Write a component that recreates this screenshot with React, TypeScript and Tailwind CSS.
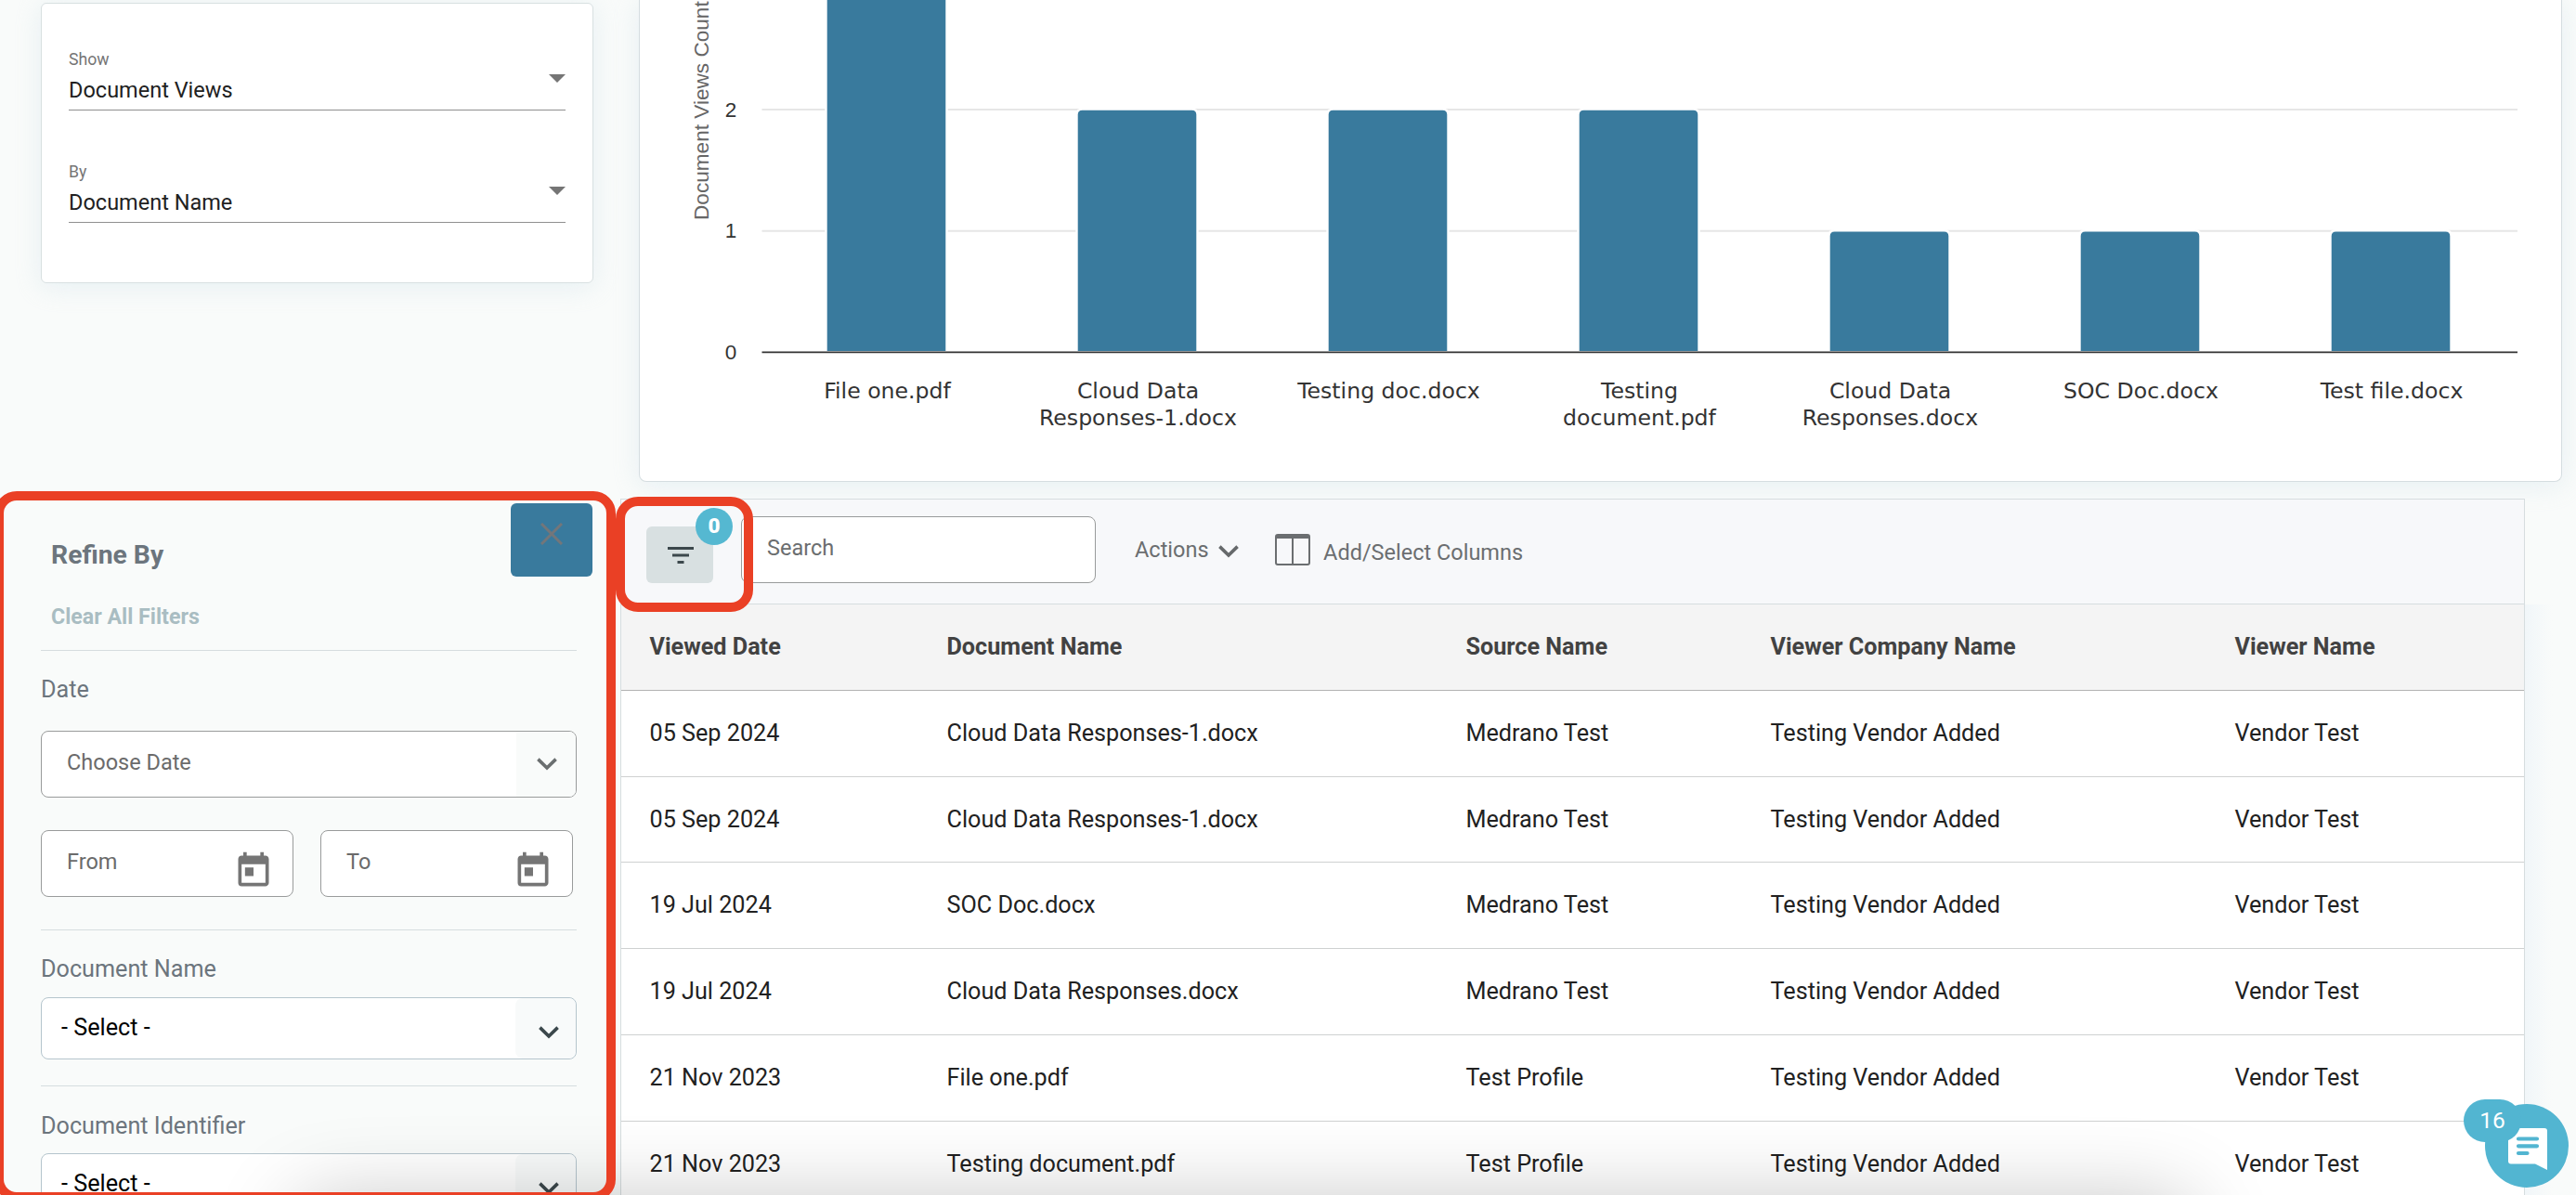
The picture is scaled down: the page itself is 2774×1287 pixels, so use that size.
import { MdToday } from 'react-icons/md';
import clsx from 'clsx';

const bars = [
  { label: ['File one.pdf'], value: 3 },
  { label: ['Cloud Data', 'Responses-1.docx'], value: 2 },
  { label: ['Testing doc.docx'], value: 2 },
  { label: ['Testing', 'document.pdf'], value: 2 },
  { label: ['Cloud Data', 'Responses.docx'], value: 1 },
  { label: ['SOC Doc.docx'], value: 1 },
  { label: ['Test file.docx'], value: 1 },
];

const columns = ['Viewed Date', 'Document Name', 'Source Name', 'Viewer Company Name', 'Viewer Name'];

const rows = [
  ['05 Sep 2024', 'Cloud Data Responses-1.docx', 'Medrano Test', 'Testing Vendor Added', 'Vendor Test'],
  ['05 Sep 2024', 'Cloud Data Responses-1.docx', 'Medrano Test', 'Testing Vendor Added', 'Vendor Test'],
  ['19 Jul 2024', 'SOC Doc.docx', 'Medrano Test', 'Testing Vendor Added', 'Vendor Test'],
  ['19 Jul 2024', 'Cloud Data Responses.docx', 'Medrano Test', 'Testing Vendor Added', 'Vendor Test'],
  ['21 Nov 2023', 'File one.pdf', 'Test Profile', 'Testing Vendor Added', 'Vendor Test'],
  ['21 Nov 2023', 'Testing document.pdf', 'Test Profile', 'Testing Vendor Added', 'Vendor Test'],
];

const rowClass = 'grid grid-cols-[320px_559px_328px_500px_1fr] items-center pl-[30.5px] h-[92.8px] border-b text-[25.2px]';

const AXIS_Y = 379.3;
const STEP_Y = 130.6;

const Chevron = ({ className }: { className?: string }) => (
  <svg viewBox="0 0 22 14" className={clsx('w-[22px] h-3.5 shrink-0', className)} fill="none" stroke="currentColor" strokeWidth="3.6">
    <path d="M1.4 1.6 11 11l9.6-9.4" />
  </svg>
);

const ReportSelect = ({ label, value }: { label: string; value: string }) => (
  <div className="flex items-end justify-between border-b border-[#8f8f8f] pb-[5px]">
    <div className="flex flex-col gap-[7px]">
      <span className="text-[17.7px] leading-5 text-[#757575]">{label}</span>
      <span className="text-[23.5px] leading-8 text-[#212121]">{value}</span>
    </div>
    <svg viewBox="0 0 18 9" className="w-[18px] h-[9px] mb-6 text-[#757575]" fill="currentColor">
      <path d="M0 0h18L9 9z" />
    </svg>
  </div>
);

const DateField = ({ label }: { label: string }) => (
  <div className="flex items-center justify-between w-[272px] h-[72px] bg-white border border-[#999b9b] rounded-lg pl-[27px] pr-5">
    <span className="text-[23.5px] leading-8 text-[#6b6b6b] pb-1">{label}</span>
    <MdToday className="text-[44px] text-[#757575] mt-[15px]" />
  </div>
);

const FilterSelect = () => (
  <div className="flex justify-between h-[67px] bg-white border border-[#b5c5cd] rounded-lg overflow-hidden">
    <span className="pl-[21px] pt-4 text-[25.2px] leading-8 text-black">- Select -</span>
    <div className="w-[65px] pl-[25px] pt-[30px] bg-[#f8fafa] rounded-lg">
      <Chevron className="text-[#3c484c]" />
    </div>
  </div>
);

const Chart = () => (
  <svg viewBox="689 0 2069 518" className="block w-[2069px] h-[518px]">
    {[1, 2].map((v) => (
      <line key={v} x1="820.5" x2="2711" y1={AXIS_Y - v * STEP_Y} y2={AXIS_Y - v * STEP_Y} stroke="#e6e6e6" strokeWidth="2" />
    ))}
    {[0, 1, 2].map((v) => (
      <text key={v} x="787" y={AXIS_Y + 7.5 - v * STEP_Y} textAnchor="middle" className="font-['Liberation_Sans',sans-serif] text-[22.5px]" fill="#333">
        {v}
      </text>
    ))}
    <text transform="translate(763 237) rotate(-90)" className="font-['Liberation_Sans',sans-serif] text-[22.6px]" fill="#666">
      Document Views Count
    </text>
    {bars.map((bar, i) => {
      const x = 889.5 + i * 270;
      const top = AXIS_Y - 0.5 - bar.value * STEP_Y;
      return (
        <g key={i}>
          <path
            d={`M${x} ${AXIS_Y}V${top + 6}q0 -6 6 -6h118q6 0 6 6V${AXIS_Y}z`}
            fill="#397a9d"
            stroke="#fff"
            strokeWidth="2.4"
          />
          {bar.label.map((line, n) => (
            <text key={n} x={x + 66} y={429 + n * 29} textAnchor="middle" className="font-['DejaVu_Sans',sans-serif] text-[23.6px]" fill="#333">
              {line}
            </text>
          ))}
        </g>
      );
    })}
    <line x1="820.5" x2="2711" y1={AXIS_Y} y2={AXIS_Y} stroke="#333" strokeWidth="1.8" />
  </svg>
);

const RefinePanel = () => (
  <aside className="w-[668px] h-[750px] overflow-hidden pl-11 pr-[47px] text-[25.2px] leading-8 text-[#6c757d]">
    <div className="flex items-start justify-between pl-[11px] -mr-[17px] h-[84px]">
      <h2 className="mt-[43px] text-[28.3px] leading-9 font-bold">Refine By</h2>
      <button className="flex justify-center w-[88px] h-[79px] mt-[5px] pt-[21px] bg-[#397a9d] rounded-md">
        <svg viewBox="0 0 24 24" className="w-6 h-6" fill="none" stroke="#73767a" strokeWidth="3">
          <path d="M1 1l22 22M23 1 1 23" />
        </svg>
      </button>
    </div>
    <button className="block mt-[27px] ml-[11px] text-[23.2px] font-bold text-[#a9bdc2]">Clear All Filters</button>

    <div className="mt-5 border-t border-[#d6dddf]">
      <div className="mt-[26px]">Date</div>
      <div className="flex justify-between h-[72px] mt-7 bg-white border border-[#999b9b] rounded-lg overflow-hidden">
        <span className="pl-[27px] pt-[17px] text-[23.5px] text-[#6b6b6b]">Choose Date</span>
        <div className="w-16 pl-[22px] pt-7 bg-[#f9fbfa]">
          <Chevron className="text-[#6b6f70]" />
        </div>
      </div>
      <div className="flex gap-[29px] mt-[35px]">
        <DateField label="From" />
        <DateField label="To" />
      </div>
    </div>

    <div className="mt-[35px] border-t border-[#d6dddf]">
      <div className="mt-[26px] mb-3.5">Document Name</div>
      <FilterSelect />
    </div>

    <div className="mt-7 border-t border-[#d6dddf]">
      <div className="mt-[27px] mb-[13px]">Document Identifier</div>
      <FilterSelect />
    </div>
  </aside>
);

const Toolbar = () => (
  <div className="flex items-start h-[113px] pl-[27px] bg-[#f7f8fa] border-b border-[#d6dddf] text-[23.5px] leading-8 text-[#6b6e70]">
    <button className="relative flex justify-center w-[72px] h-[61px] mt-[29px] pt-[22px] bg-[#d8e0e1] rounded-md">
      <svg viewBox="0 0 28 18" className="w-7 h-[18px] ml-px" fill="#3c484c">
        <path d="M0 0h28v3H0zM5 7.5h18v3H5zM10.500 15h7v3h-7z" />
      </svg>
      <span className="absolute left-[53px] -top-5 w-10 h-10 rounded-full bg-[#55b8d1] text-center text-[22.5px] leading-[38px] font-black text-white">0</span>
    </button>
    <div className="flex items-center w-[382px] h-[72px] mt-[18px] ml-[30px] pl-[27px] pb-1 bg-white border border-[#999b9b] rounded-lg">
      Search
    </div>
    <button className="flex items-center gap-2.5 mt-[38px] ml-[42px]">
      Actions
      <Chevron className="text-[#66696b] mt-1" />
    </button>
    <button className="flex items-start gap-3.5 mt-[37px] ml-[39.5px]">
      <svg viewBox="0 0 38 34" className="w-[38px] h-[34px]" fill="none" stroke="#6b6e70" strokeWidth="2">
        <rect x="1" y="1" width="36" height="32" rx="2" />
        <path d="M19 3v30" />
        <path d="M1 3h36" strokeWidth="4" />
      </svg>
      <span className="mt-1">Add/Select Columns</span>
    </button>
  </div>
);

const DocumentTable = () => (
  <section className="w-[2051px] border-t border-[#d6dddf]">
    <div className="border-x border-l-[#d6dddf] border-r-[#d6dddf] h-[749px] overflow-hidden bg-white">
      <Toolbar />
      <div className={clsx(rowClass, 'bg-[#f4f4f4] border-[#b3b3b3] font-bold text-[#424242]')}>
        {columns.map((name) => (
          <span key={name}>{name}</span>
        ))}
      </div>
      {rows.map((row, i) => (
        <div key={i} className={clsx(rowClass, 'border-[#cfd1d1] text-[#212121]')}>
          {row.map((cell, n) => (
            <span key={n}>{cell}</span>
          ))}
        </div>
      ))}
    </div>
  </section>
);

const ChatButton = () => (
  <div className="absolute left-[2653px] top-[1184px]">
    <div className="absolute left-[23px] top-[5px] w-[90px] h-[90px] rounded-full bg-[#52b5d1]">
      <svg viewBox="0 0 42 45" className="absolute left-[25px] top-[25.5px] w-[42px] h-[45px]">
        <path d="M3 0h36a3 3 0 0 1 3 3v42l-13-6.5H3a3 3 0 0 1-3-3V3a3 3 0 0 1 3-3z" fill="#fff" />
        <path d="M11 11.5h20M11 19.3h20M11 27h9.5" stroke="#52b5d1" strokeWidth="4.2" strokeLinecap="round" />
      </svg>
    </div>
    <span className="absolute w-[62px] h-[46px] rounded-full bg-[#52b5d1] text-center text-[24.5px] leading-[45px] text-white">16</span>
  </div>
);

export default function App() {
  return (
    <div className="relative w-[2774px] h-[1287px] overflow-hidden bg-[#f9fbfa] font-[Roboto,sans-serif]">
      <div className="flex items-start h-[537px]">
        <div className="flex flex-col gap-14 w-[595px] h-[302px] mt-[3px] ml-11 px-[29px] pt-[50px] bg-white border border-[#d8e0e1] rounded-md shadow-[0_4px_28px_rgba(208,226,236,0.45)]">
          <ReportSelect label="Show" value="Document Views" />
          <ReportSelect label="By" value="Document Name" />
        </div>
        <div className="ml-[49px] w-[2071px] bg-white border border-t-0 border-[#d5dde0] rounded-b-lg shadow-[0_4px_28px_rgba(208,226,236,0.45)]">
          <Chart />
        </div>
      </div>

      <div className="flex items-start">
        <RefinePanel />
        <DocumentTable />
        <div className="w-9 h-[636px] mt-[114px] bg-linear-to-r from-[#f1f6f9] to-[#f9fbfa] to-80%" />
      </div>

      {/* shadow cast from below the fold */}
      <div className="absolute left-[320px] top-[1293px] w-[2040px] h-40 rounded-3xl shadow-[0_0_90px_rgba(0,0,0,0.23)]" />

      {/* highlight frames */}
      <div className="absolute -left-1.5 top-[529px] w-[669px] h-[765px] rounded-3xl border-10 border-[#ea4025]" />
      <div className="absolute left-[663px] top-[535px] w-[148px] h-[124px] rounded-3xl border-10 border-[#ea4025]" />

      <ChatButton />
    </div>
  );
}
